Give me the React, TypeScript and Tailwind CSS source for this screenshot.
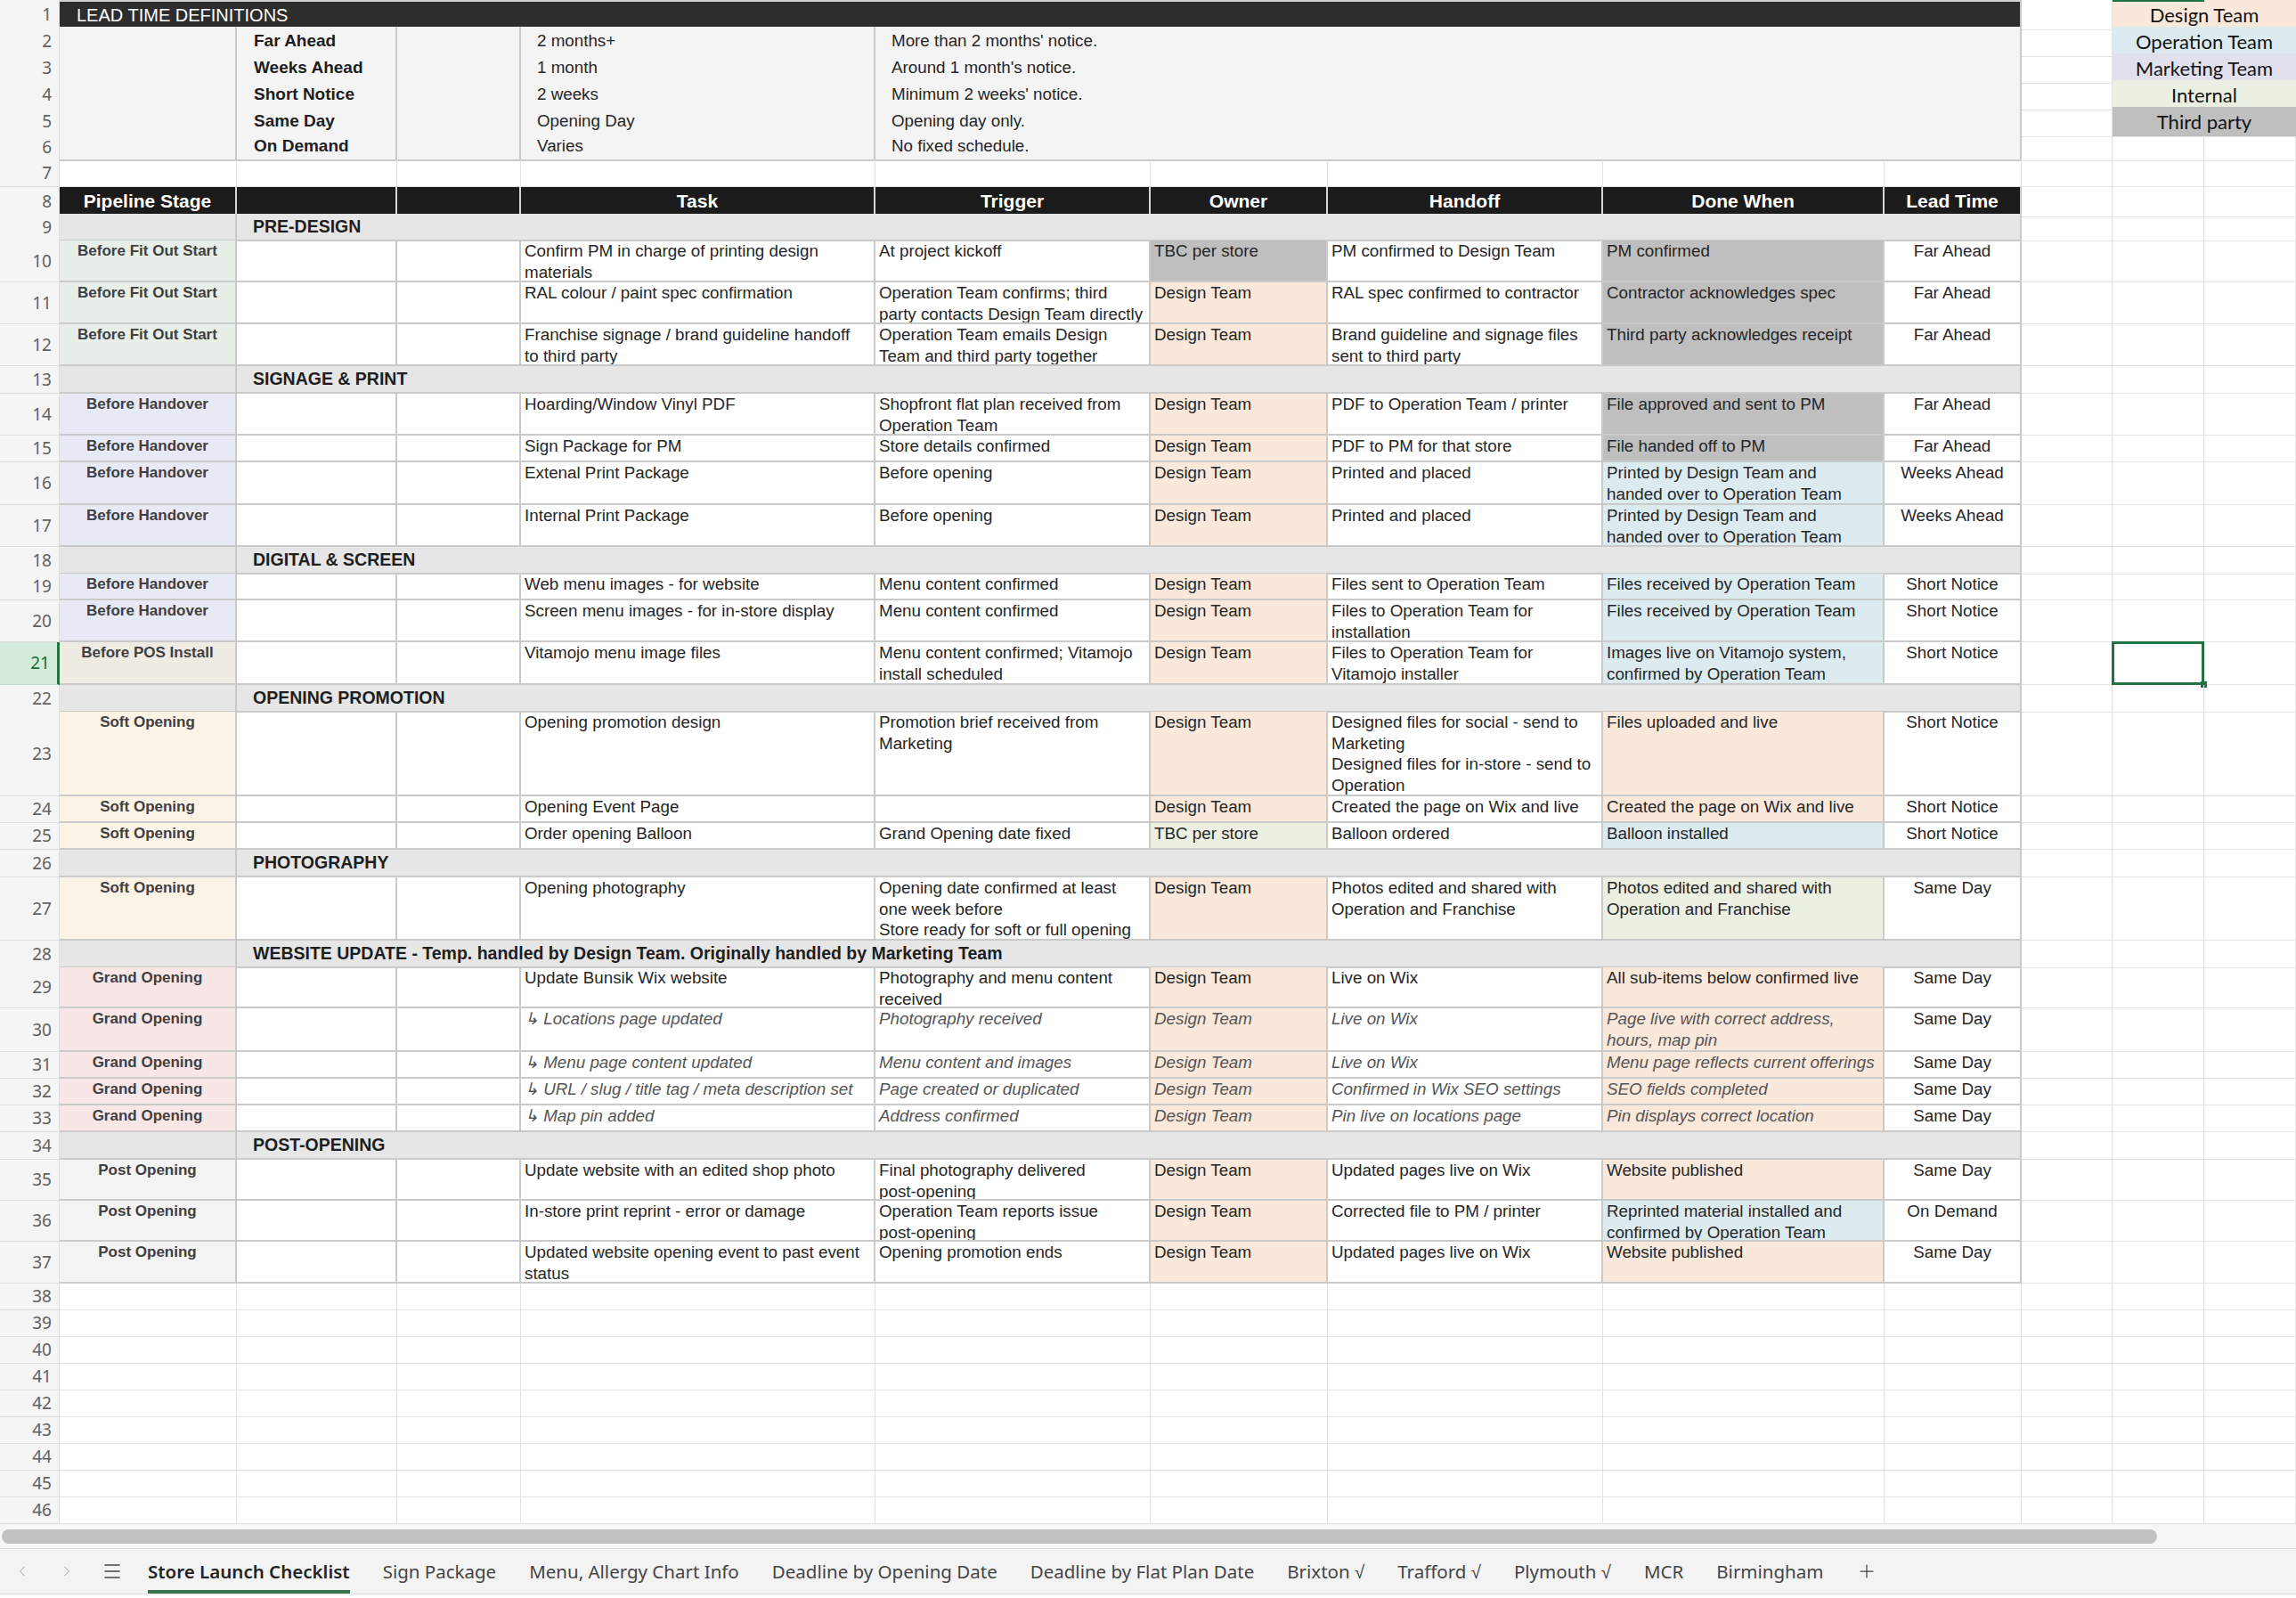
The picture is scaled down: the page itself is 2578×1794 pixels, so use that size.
import { ChevronLeft, ChevronRight, Menu, Plus } from "lucide-react";

const COLS =
  "grid grid-cols-[67px_199px_180px_139px_398px_309px_199px_309px_316px_154px_102px_103px_103px]";
const T = "border-r-2 border-b-2 border-[#cacaca]";
const L = "border-r border-b border-[#e2e2e2]";
const TXT = "px-[4px] leading-[23.5px] whitespace-pre overflow-hidden text-[18.8px]";

const stageBg: Record<string, string> = {
  fit: "bg-[#e8efe8]",
  hand: "bg-[#e7eaf5]",
  pos: "bg-[#eeebe3]",
  soft: "bg-[#fbf3e6]",
  grand: "bg-[#f9e7e7]",
  post: "bg-[#f3f3f3]",
};
const stageName: Record<string, string> = {
  fit: "Before Fit Out Start",
  hand: "Before Handover",
  pos: "Before POS Install",
  soft: "Soft Opening",
  grand: "Grand Opening",
  post: "Post Opening",
};

const DES = "bg-[#fae8db]";
const OPS = "bg-[#dcebf0]";
const INT = "bg-[#ecf0e2]";
const THD = "bg-[#bfbfbf]";

const legend = [
  ["Design Team", DES],
  ["Operation Team", OPS],
  ["Marketing Team", "bg-[#e3e0ee]"],
  ["Internal", INT],
  ["Third party", THD],
];

const defs = [
  ["Far Ahead", "2 months+", "More than 2 months' notice."],
  ["Weeks Ahead", "1 month", "Around 1 month's notice."],
  ["Short Notice", "2 weeks", "Minimum 2 weeks' notice."],
  ["Same Day", "Opening Day", "Opening day only."],
  ["On Demand", "Varies", "No fixed schedule."],
];

type Sec = { n: number; h: string; sec: string };
type Data = {
  n: number;
  h: string;
  st: string;
  task: string;
  trig: string;
  own: string;
  ownBg: string;
  hand: string;
  done: string;
  doneBg: string;
  lead: string;
  it?: boolean;
};

const rows: (Sec | Data)[] = [
  { n: 9, h: "h-[30px]", sec: "PRE-DESIGN" },
  { n: 10, h: "h-[47px]", st: "fit", task: "Confirm PM in charge of printing design\nmaterials", trig: "At project kickoff", own: "TBC per store", ownBg: THD, hand: "PM confirmed to Design Team", done: "PM confirmed", doneBg: THD, lead: "Far Ahead" },
  { n: 11, h: "h-[47px]", st: "fit", task: "RAL colour / paint spec confirmation", trig: "Operation Team confirms; third\nparty contacts Design Team directly", own: "Design Team", ownBg: DES, hand: "RAL spec confirmed to contractor", done: "Contractor acknowledges spec", doneBg: THD, lead: "Far Ahead" },
  { n: 12, h: "h-[47px]", st: "fit", task: "Franchise signage / brand guideline handoff\nto third party", trig: "Operation Team emails Design\nTeam and third party together", own: "Design Team", ownBg: DES, hand: "Brand guideline and signage files\nsent to third party", done: "Third party acknowledges receipt", doneBg: THD, lead: "Far Ahead" },
  { n: 13, h: "h-[31px]", sec: "SIGNAGE & PRINT" },
  { n: 14, h: "h-[47px]", st: "hand", task: "Hoarding/Window Vinyl PDF", trig: "Shopfront flat plan received from\nOperation Team", own: "Design Team", ownBg: DES, hand: "PDF to Operation Team / printer", done: "File approved and sent to PM", doneBg: THD, lead: "Far Ahead" },
  { n: 15, h: "h-[30px]", st: "hand", task: "Sign Package for PM", trig: "Store details confirmed", own: "Design Team", ownBg: DES, hand: "PDF to PM for that store", done: "File handed off to PM", doneBg: THD, lead: "Far Ahead" },
  { n: 16, h: "h-[48px]", st: "hand", task: "Extenal Print Package", trig: "Before opening", own: "Design Team", ownBg: DES, hand: "Printed and placed", done: "Printed by Design Team and\nhanded over to Operation Team", doneBg: OPS, lead: "Weeks Ahead" },
  { n: 17, h: "h-[47px]", st: "hand", task: "Internal Print Package", trig: "Before opening", own: "Design Team", ownBg: DES, hand: "Printed and placed", done: "Printed by Design Team and\nhanded over to Operation Team", doneBg: OPS, lead: "Weeks Ahead" },
  { n: 18, h: "h-[30px]", sec: "DIGITAL & SCREEN" },
  { n: 19, h: "h-[30px]", st: "hand", task: "Web menu images - for website", trig: "Menu content confirmed", own: "Design Team", ownBg: DES, hand: "Files sent to Operation Team", done: "Files received by Operation Team", doneBg: OPS, lead: "Short Notice" },
  { n: 20, h: "h-[47px]", st: "hand", task: "Screen menu images - for in-store display", trig: "Menu content confirmed", own: "Design Team", ownBg: DES, hand: "Files to Operation Team for\ninstallation", done: "Files received by Operation Team", doneBg: OPS, lead: "Short Notice" },
  { n: 21, h: "h-[48px]", st: "pos", task: "Vitamojo menu image files", trig: "Menu content confirmed; Vitamojo\ninstall scheduled", own: "Design Team", ownBg: DES, hand: "Files to Operation Team for\nVitamojo installer", done: "Images live on Vitamojo system,\nconfirmed by Operation Team", doneBg: OPS, lead: "Short Notice" },
  { n: 22, h: "h-[30px]", sec: "OPENING PROMOTION" },
  { n: 23, h: "h-[95px]", st: "soft", task: "Opening promotion design", trig: "Promotion brief received from\nMarketing", own: "Design Team", ownBg: DES, hand: "Designed files for social - send to\nMarketing\nDesigned files for in-store - send to\nOperation", done: "Files uploaded and live", doneBg: DES, lead: "Short Notice" },
  { n: 24, h: "h-[30px]", st: "soft", task: "Opening Event Page", trig: "", own: "Design Team", ownBg: DES, hand: "Created the page on Wix and live", done: "Created the page on Wix and live", doneBg: DES, lead: "Short Notice" },
  { n: 25, h: "h-[30px]", st: "soft", task: "Order opening Balloon", trig: "Grand Opening date fixed", own: "TBC per store", ownBg: INT, hand: "Balloon ordered", done: "Balloon installed", doneBg: OPS, lead: "Short Notice" },
  { n: 26, h: "h-[31px]", sec: "PHOTOGRAPHY" },
  { n: 27, h: "h-[71px]", st: "soft", task: "Opening photography", trig: "Opening date confirmed at least\none week before\nStore ready for soft or full opening", own: "Design Team", ownBg: DES, hand: "Photos edited and shared with\nOperation and Franchise", done: "Photos edited and shared with\nOperation and Franchise", doneBg: INT, lead: "Same Day" },
  { n: 28, h: "h-[30px]", sec: "WEBSITE UPDATE - Temp. handled by Design Team. Originally handled by Marketing Team" },
  { n: 29, h: "h-[46px]", st: "grand", task: "Update Bunsik Wix website", trig: "Photography and menu content\nreceived", own: "Design Team", ownBg: DES, hand: "Live on Wix", done: "All sub-items below confirmed live", doneBg: DES, lead: "Same Day" },
  { n: 30, h: "h-[49px]", st: "grand", it: true, task: "↳ Locations page updated", trig: "Photography received", own: "Design Team", ownBg: DES, hand: "Live on Wix", done: "Page live with correct address,\nhours, map pin", doneBg: DES, lead: "Same Day" },
  { n: 31, h: "h-[30px]", st: "grand", it: true, task: "↳ Menu page content updated", trig: "Menu content and images", own: "Design Team", ownBg: DES, hand: "Live on Wix", done: "Menu page reflects current offerings", doneBg: DES, lead: "Same Day" },
  { n: 32, h: "h-[30px]", st: "grand", it: true, task: "↳ URL / slug / title tag / meta description set", trig: "Page created or duplicated", own: "Design Team", ownBg: DES, hand: "Confirmed in Wix SEO settings", done: "SEO fields completed", doneBg: DES, lead: "Same Day" },
  { n: 33, h: "h-[30px]", st: "grand", it: true, task: "↳ Map pin added", trig: "Address confirmed", own: "Design Team", ownBg: DES, hand: "Pin live on locations page", done: "Pin displays correct location", doneBg: DES, lead: "Same Day" },
  { n: 34, h: "h-[31px]", sec: "POST-OPENING" },
  { n: 35, h: "h-[46px]", st: "post", task: "Update website with an edited shop photo", trig: "Final photography delivered\npost-opening", own: "Design Team", ownBg: DES, hand: "Updated pages live on Wix", done: "Website published", doneBg: DES, lead: "Same Day" },
  { n: 36, h: "h-[46px]", st: "post", task: "In-store print reprint - error or damage", trig: "Operation Team reports issue\npost-opening", own: "Design Team", ownBg: DES, hand: "Corrected file to PM / printer", done: "Reprinted material installed and\nconfirmed by Operation Team", doneBg: OPS, lead: "On Demand" },
  { n: 37, h: "h-[47px]", st: "post", task: "Updated website opening event to past event\nstatus", trig: "Opening promotion ends", own: "Design Team", ownBg: DES, hand: "Updated pages live on Wix", done: "Website published", doneBg: DES, lead: "Same Day" },
];

const tabs = [
  "Store Launch Checklist",
  "Sign Package",
  "Menu, Allergy Chart Info",
  "Deadline by Opening Date",
  "Deadline by Flat Plan Date",
  "Brixton √",
  "Trafford √",
  "Plymouth √",
  "MCR",
  "Birmingham",
];

function RowHead({ n, active }: { n: number; active?: boolean }) {
  return (
    <div
      className={`flex items-center justify-end pr-[8px] font-['Noto_Sans',sans-serif] text-[19px] ${
        active
          ? "bg-[#d3ebdb] text-[#1d6b3a] border-r-[3px] border-r-[#217346] border-b border-b-[#c7dccd]"
          : "bg-[#f5f5f5] text-[#616161] border-r border-b border-[#dcdcdc]"
      }`}
    >
      {n}
    </div>
  );
}

function Blank3({ sel }: { sel?: boolean }) {
  return (
    <>
      <div className={L} />
      <div className={`${L} relative`}>
        {sel && (
          <>
            <div className="absolute -top-[1px] -left-[1px] -right-[1px] -bottom-[1px] border-[3px] border-[#217346]" />
            <div className="absolute -right-[4px] -bottom-[4px] w-[7px] h-[7px] bg-[#217346]" />
          </>
        )}
      </div>
      <div className={L} />
    </>
  );
}

function Legend({ i }: { i: number }) {
  const [name, bg] = legend[i];
  return (
    <div
      className={`col-span-2 relative flex items-center justify-center font-['Lato',sans-serif] text-[22px] text-[#141414] border-b border-[#e4e4e4] ${bg}`}
    >
      {i === 0 && <div className="absolute top-0 left-0 w-[103px] h-[2px] bg-[#217346]" />}
      {name}
    </div>
  );
}

export default function App() {
  return (
    <div className="w-[2578px] h-[1794px] overflow-hidden bg-white text-[#262626] font-['Liberation_Sans',Arial,sans-serif]">
      {/* row 1 */}
      <div className={`${COLS} h-[30px]`}>
        <RowHead n={1} />
        <div className="col-span-9 bg-[#2d2d2d] border-r-2 border-b-2 border-[#c6c6c6] border-t-2 border-t-[#d0d0d0] text-white text-[20px] pl-[19px] flex items-center">
          LEAD TIME DEFINITIONS
        </div>
        <div className={L} />
        <Legend i={0} />
      </div>

      {/* rows 2-6 */}
      {defs.map(([label, val, desc], i) => (
        <div key={label} className={`${COLS} h-[30px]`}>
          <RowHead n={i + 2} />
          <div className={`bg-[#f4f4f4] ${T}`} />
          <div className={`bg-[#f4f4f4] ${T} flex items-center pl-[19px] font-bold text-[19px] text-[#1e1e1e]`}>{label}</div>
          <div className={`bg-[#f4f4f4] ${T}`} />
          <div className={`bg-[#f4f4f4] ${T} flex items-center pl-[18px] text-[18.8px]`}>{val}</div>
          <div className={`col-span-5 bg-[#f4f4f4] ${T} flex items-center pl-[18px] text-[18.8px]`}>{desc}</div>
          <div className={L} />
          {i < 4 ? (
            <Legend i={i + 1} />
          ) : (
            <>
              <div className={L} />
              <div className={L} />
            </>
          )}
        </div>
      ))}

      {/* row 7 */}
      <div className={`${COLS} h-[30px]`}>
        <RowHead n={7} />
        {Array.from({ length: 12 }).map((_, i) => (
          <div key={i} className={L} />
        ))}
      </div>

      {/* row 8 header */}
      <div className={`${COLS} h-[30px]`}>
        <RowHead n={8} />
        {["Pipeline Stage", "", "", "Task", "Trigger", "Owner", "Handoff", "Done When", "Lead Time"].map((h, i) => (
          <div
            key={i}
            className={`bg-[#1b1b1b] text-white font-bold text-[21px] flex items-center justify-center border-b-2 border-b-[#c6c6c6] border-r-2 ${
              i === 8 ? "border-r-[#c6c6c6]" : "border-r-[#d6d6d6]"
            }`}
          >
            {h}
          </div>
        ))}
        <Blank3 />
      </div>

      {rows.map((r) =>
        "sec" in r ? (
          <div key={r.n} className={`${COLS} ${r.h}`}>
            <RowHead n={r.n} />
            <div className={`bg-[#e6e6e6] ${T}`} />
            <div className={`col-span-8 bg-[#e6e6e6] ${T} flex items-center pl-[18px] font-bold text-[19.5px] text-[#1e1e1e] whitespace-nowrap`}>
              {r.sec}
            </div>
            <Blank3 />
          </div>
        ) : (
          <div key={r.n} className={`${COLS} ${r.h}`}>
            <RowHead n={r.n} active={r.n === 21} />
            <div className={`${stageBg[r.st]} ${T} text-center font-bold text-[17px] text-[#404040] leading-[23.5px]`}>
              {stageName[r.st]}
            </div>
            <div className={T} />
            <div className={T} />
            <div className={`${T} ${TXT} ${r.it ? "italic text-[#555]" : ""}`}>{r.task}</div>
            <div className={`${T} ${TXT} ${r.it ? "italic text-[#555]" : ""}`}>{r.trig}</div>
            <div className={`${T} ${TXT} ${r.ownBg} ${r.it ? "italic text-[#555]" : ""}`}>{r.own}</div>
            <div className={`${T} ${TXT} ${r.it ? "italic text-[#555]" : ""}`}>{r.hand}</div>
            <div className={`${T} ${TXT} ${r.doneBg} ${r.it ? "italic text-[#555]" : ""}`}>{r.done}</div>
            <div className={`${T} text-center leading-[23.5px] text-[18.8px]`}>{r.lead}</div>
            <Blank3 sel={r.n === 21} />
          </div>
        )
      )}

      {/* rows 38-46 */}
      {Array.from({ length: 9 }).map((_, k) => (
        <div key={k} className={`${COLS} h-[30px]`}>
          <RowHead n={38 + k} />
          {Array.from({ length: 12 }).map((_, i) => (
            <div key={i} className={L} />
          ))}
        </div>
      ))}

      {/* horizontal scrollbar */}
      <div className="h-[27px] bg-[#f6f6f6] flex items-center pl-[2px]">
        <div className="h-[16px] w-[2420px] rounded-full bg-[#c2c2c2]" />
      </div>

      {/* sheet tabs */}
      <div className="h-[52px] bg-[#f3f3f3] border-t border-b border-[#dedede] flex items-stretch font-['Noto_Sans',sans-serif] text-[20.5px]">
        <div className="w-[50px] flex items-center justify-center text-[#b3b3b3]">
          <ChevronLeft size={20} strokeWidth={1.25} />
        </div>
        <div className="w-[50px] flex items-center justify-center text-[#b3b3b3]">
          <ChevronRight size={20} strokeWidth={1.25} />
        </div>
        <div className="w-[51px] flex items-center justify-center text-[#444]">
          <Menu size={24} strokeWidth={1.5} />
        </div>
        <div className="ml-[15px] flex items-stretch gap-[37px]">
          {tabs.map((t, i) => (
            <div
              key={t}
              className={`relative flex items-center whitespace-nowrap ${
                i === 0 ? "font-semibold text-[#242424]" : "text-[#444]"
              }`}
            >
              {t}
              {i === 0 && <div className="absolute left-0 right-0 bottom-0 h-[4px] bg-[#3b7550]" />}
            </div>
          ))}
          <div className="flex items-center text-[#444]">
            <Plus size={24} strokeWidth={1.25} />
          </div>
        </div>
      </div>
    </div>
  );
}
